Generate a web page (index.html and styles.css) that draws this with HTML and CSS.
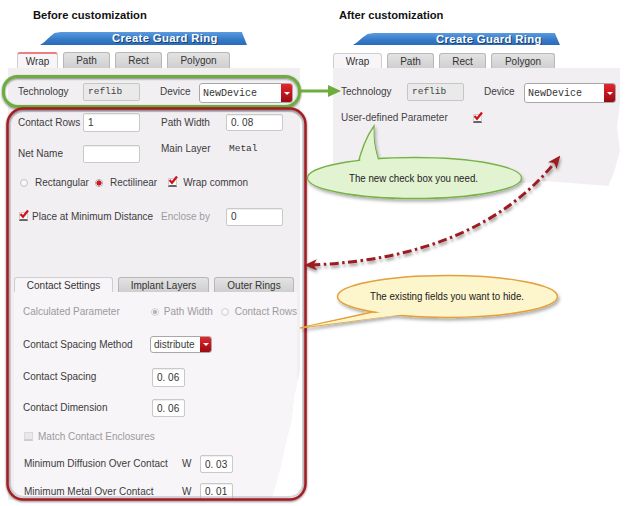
FILE: index.html
```html
<!DOCTYPE html>
<html>
<head>
<meta charset="utf-8">
<title>Create Guard Ring customization</title>
<link rel="stylesheet" href="styles.css">
</head>
<body>
<div class="stage">
  <section class="col before">
    <h2 class="title">Before customization</h2>
    <div class="dlg-head">Create Guard Ring</div>
    <div class="tabs">
      <div class="tab active red-top tw-wrap">Wrap</div>
      <div class="tab tw-path">Path</div>
      <div class="tab tw-rect">Rect</div>
      <div class="tab tw-poly">Polygon</div>
    </div>
    <div class="panel panel-left">
      <div class="row row-tech">
        <span class="lbl l-tech">Technology</span>
        <span class="ro">reflib</span>
        <span class="lbl l-dev">Device</span>
        <span class="dd dd-dev"><span class="dd-text mono">NewDevice</span><span class="dd-btn"></span></span>
      </div>
      <div class="row row-a">
        <span class="lbl c1">Contact Rows</span>
        <span class="field f1">1</span>
        <span class="lbl c2">Path Width</span>
        <span class="field f2">0. 08</span>
      </div>
      <div class="row row-b">
        <span class="lbl c1">Net Name</span>
        <span class="field f1b"></span>
        <span class="lbl c2 up">Main Layer</span>
        <span class="mono metal up">Metal</span>
      </div>
      <div class="row row-c">
        <span class="radio"></span><span class="lbl ml7">Rectangular</span>
        <span class="radio on ml6"></span><span class="lbl ml7">Rectilinear</span>
        <span class="chk ml11"><svg viewBox="0 0 10 10" width="10" height="10"><path d="M1.5 5 L4 7.8 L9 1.5" fill="none" stroke="#d0121b" stroke-width="2.2"/></svg></span><span class="lbl ml6">Wrap common</span>
      </div>
      <div class="row row-d">
        <span class="chk"><svg viewBox="0 0 10 10" width="10" height="10"><path d="M1.5 5 L4 7.8 L9 1.5" fill="none" stroke="#d0121b" stroke-width="2.2"/></svg></span>
        <span class="lbl ml4 l-place">Place at Minimum Distance</span>
        <span class="lbl dis c2b">Enclose by</span>
        <span class="field f2b">0</span>
      </div>

      <div class="subtabs">
        <div class="tab active st-cs">Contact Settings</div>
        <div class="tab st-il">Implant Layers</div>
        <div class="tab st-or">Outer Rings</div>
      </div>
      <div class="subpanel">
        <div class="row r33">
          <span class="lbl dis s-calc">Calculated Parameter</span>
          <span class="radio dis dot"></span><span class="lbl dis ml5">Path Width</span>
          <span class="radio dis ml8"></span><span class="lbl dis ml6">Contact Rows</span>
        </div>
        <div class="row r33">
          <span class="lbl s-csm">Contact Spacing Method</span>
          <span class="dd dd-dist"><span class="dd-text">distribute</span><span class="dd-btn"></span></span>
        </div>
        <div class="row r32">
          <span class="lbl s-cs">Contact Spacing</span>
          <span class="field fs">0. 06</span>
        </div>
        <div class="row r30">
          <span class="lbl s-cs">Contact Dimension</span>
          <span class="field fs fs18">0. 06</span>
        </div>
        <div class="row r27">
          <span class="chk dis ml1"></span><span class="lbl dis ml5">Match Contact Enclosures</span>
        </div>
        <div class="row r28">
          <span class="lbl s-min">Minimum Diffusion Over Contact</span>
          <span class="lbl s-w">W</span>
          <span class="field fw">0. 03</span>
        </div>
        <div class="row r-last">
          <span class="lbl s-min">Minimum Metal Over Contact</span>
          <span class="lbl s-w">W</span>
          <span class="field fw fw17">0. 01</span>
        </div>
      </div>
    </div>
  </section>

  <section class="col after">
    <h2 class="title">After customization</h2>
    <div class="dlg-head">Create Guard Ring</div>
    <div class="tabs">
      <div class="tab active tr-wrap">Wrap</div>
      <div class="tab tw-path">Path</div>
      <div class="tab tw-rect">Rect</div>
      <div class="tab tr-poly">Polygon</div>
    </div>
    <div class="panel panel-right">
      <div class="row row-tech-r">
        <span class="lbl l-tech-r">Technology</span>
        <span class="ro">reflib</span>
        <span class="lbl l-dev-r">Device</span>
        <span class="dd dd-dev-r"><span class="dd-text mono">NewDevice</span><span class="dd-btn"></span></span>
      </div>
      <div class="row row-user">
        <span class="lbl l-user">User-defined Parameter</span>
        <span class="chk"><svg viewBox="0 0 10 10" width="10" height="10"><path d="M1.5 5 L4 7.8 L9 1.5" fill="none" stroke="#d0121b" stroke-width="2.2"/></svg></span>
      </div>
    </div>
  </section>

  <svg class="notes" width="628" height="506" viewBox="0 0 628 506">
    <defs>
      <filter id="ringsh" x="-5%" y="-20%" width="110%" height="140%">
        <feDropShadow dx="0" dy="1" stdDeviation="1.3" flood-color="#000" flood-opacity="0.5"/>
      </filter>
      <filter id="bubsh" x="-10%" y="-20%" width="125%" height="150%">
        <feDropShadow dx="1.5" dy="2.5" stdDeviation="1.6" flood-color="#000" flood-opacity="0.3"/>
      </filter>
      <filter id="arrsh" x="-10%" y="-20%" width="125%" height="150%">
        <feDropShadow dx="1" dy="2.5" stdDeviation="1.4" flood-color="#000" flood-opacity="0.4"/>
      </filter>
      <marker id="ah" viewBox="0 0 13 11" refX="6" refY="5.5" markerWidth="13" markerHeight="11" markerUnits="userSpaceOnUse" orient="auto-start-reverse">
        <path d="M0 0 L13 5.5 L0 11 L3.5 5.5 Z" fill="#9d1c24"/>
      </marker>
    </defs>

    <rect class="ring ring-green" x="3.5" y="76.5" width="296" height="30" rx="14"/>
    <path class="garrow" d="M300 91 H331"/>
    <path class="ghead" d="M328 85 L341 91 L328 97 Z"/>

    <rect class="ring-inner" x="10" y="111" width="293" height="386" rx="14"/>
    <rect class="ring ring-red" x="7.5" y="108.5" width="298" height="391" rx="16"/>

    <path class="dash" d="M311 265 Q 478 258 556 161" marker-start="url(#ah)" marker-end="url(#ah)"/>

    <g filter="url(#bubsh)">
      <path class="bub-g" d="M357 168 C 361 150, 366 137, 374 126 C 373 140, 375 153, 382 168 Z"/>
      <ellipse class="bub-g" cx="414.5" cy="178" rx="107" ry="20.5"/>
      <path class="bub-g-fill" d="M358.6 167 C 362.5 151, 367 139, 373.6 128.5 C 373 141, 375 153, 380.6 167 Z"/>
    </g>
    <text class="bub-text" x="349" y="182" textLength="129" lengthAdjust="spacingAndGlyphs">The new check box you need.</text>

    <g filter="url(#bubsh)">
      <path class="bub-y" d="M386 309 L300 328 L416 312 Z"/>
      <ellipse class="bub-y" cx="447.5" cy="296.5" rx="110" ry="21"/>
      <path class="bub-y-fill" d="M386 311 L305 327 L414 313 Z"/>
    </g>
    <text class="bub-text" x="370" y="300" textLength="154" lengthAdjust="spacingAndGlyphs">The existing fields you want to hide.</text>
  </svg>
</div>
</body>
</html>
```

FILE: styles.css
```css
* { box-sizing: border-box; }
html, body { margin: 0; padding: 0; background: #fff; }
body {
  font-family: "Liberation Sans", Arial, sans-serif;
  font-size: 10px;
  color: #3c3c3c;
}
.stage {
  position: relative;
  width: 628px;
  height: 506px;
  overflow: hidden;
  display: flex;
  background: #fff;
}
.col { display: flex; flex-direction: column; }
.before { width: 333px; flex: none; }
.after { flex: 1; }

.title {
  margin: 0;
  padding: 8px 0 0 33px;
  height: 22px;
  font-size: 11.2px;
  line-height: 14px;
  font-weight: bold;
  color: #111;
}
.after .title { padding-left: 6px; }

.dlg-head {
  margin: 10px 0 0 40px;
  width: 207px;
  height: 13px;
  padding-left: 72px;
  background: linear-gradient(#5a9be0, #3479c6 60%, #2b6bb8);
  clip-path: polygon(0 100%, 2% 78%, 4.5% 40%, 7% 8%, 10% 0, 97.5% 0, 100% 100%);
  color: #fff;
  font-weight: bold;
  font-size: 11.3px;
  line-height: 13px;
  letter-spacing: 0.35px;
  text-shadow: 1px 1px 0 #1b416f;
  white-space: nowrap;
}
.after .dlg-head { margin: 11px 0 0 20px; height: 12px; line-height: 12px; padding-left: 83px; }

.tabs {
  display: flex;
  gap: 5px;
  margin-top: 7px;
  padding-left: 17px;
  height: 16px;
}
.after .tabs { padding-left: 0; margin-top: 8px; height: 15px; }

.tab {
  height: 100%;
  display: flex;
  align-items: center;
  justify-content: center;
  border: 1px solid #b7b7b7;
  border-bottom: none;
  border-radius: 3px 3px 0 0;
  background: linear-gradient(#e3e3e3, #cfcfcf);
  color: #333;
  white-space: nowrap;
}
.tab.active { background: #f7f5f8; border-color: #d0cdd1; }
.tab.red-top { border-top: 2px solid #eb7f7f; }
.tw-wrap { width: 41px; }
.tw-path { width: 47px; }
.tw-rect { width: 47px; }
.tw-poly { width: 63px; }
.tr-wrap { width: 49px; }
.tr-poly { width: 64px; }

.panel { background: #f2eff3; }
.panel-left {
  margin-left: 8px;
  width: 292px;
  height: 432px;
  padding-top: 8px;
  overflow: hidden;
  clip-path: polygon(0 0, 100% 0, 100% 70%, 98% 76%, 97% 82%, 95% 87%, 93.5% 92%, 91.5% 97%, 90% 100%, 0 100%);
}
.panel-right {
  width: 287px;
  height: 118px;
  padding: 8px 0 0 8px;
  clip-path: polygon(0 0, 100% 0, 100% 30%, 99% 50%, 100% 70%, 98% 88%, 96% 100%, 75% 96%, 50% 100%, 25% 97%, 0 100%);
}

.row { display: flex; align-items: center; }
.lbl { line-height: 12px; white-space: nowrap; }
.dis { color: #9d9a9e; }
.mono { font-family: "Liberation Mono", "Courier New", monospace; color: #333; }

.ml1 { margin-left: 1px; }
.ml4 { margin-left: 4px; }
.ml5 { margin-left: 5px; }
.ml6 { margin-left: 6px; }
.ml7 { margin-left: 7px; }
.ml8 { margin-left: 8px; }
.ml11 { margin-left: 11px; }

.ro {
  width: 57px;
  height: 18px;
  display: flex;
  align-items: center;
  padding-left: 4px;
  background: #ebeaeb;
  border: 1px solid #c6c6c6;
  border-radius: 2px;
  font-family: "Liberation Mono", "Courier New", monospace;
  font-size: 9.5px;
  color: #444;
}
.field {
  display: flex;
  align-items: center;
  padding-left: 4px;
  background: #fff;
  border: 1px solid #c9c9c9;
  border-radius: 2px;
  box-shadow: inset 0 1px 1px rgba(0, 0, 0, 0.07);
  color: #333;
  white-space: nowrap;
}

.dd {
  display: flex;
  align-items: stretch;
  background: #fff;
  border: 1px solid #a8a8a8;
  border-radius: 3px;
  overflow: hidden;
}
.dd-text { flex: 1; display: flex; align-items: center; padding-left: 3px; }
.dd .mono { font-size: 10px; }
.dd-btn {
  width: 11px;
  display: flex;
  align-items: center;
  justify-content: center;
  background: linear-gradient(#e5262f, #9b0a11);
}
.dd-btn::after {
  content: "";
  border-left: 3px solid transparent;
  border-right: 3px solid transparent;
  border-top: 3px solid #fff;
}

.radio {
  width: 8px;
  height: 8px;
  flex: none;
  border-radius: 50%;
  border: 1px solid #c9c6c9;
  background: radial-gradient(circle at 50% 40%, #fff, #e9e7e9);
}
.radio.on { background: radial-gradient(circle, #d3151d 0 2.3px, #fff 2.9px); border-color: #aaa; }
.radio.dis { border-color: #d6d3d6; }
.radio.dot { background: radial-gradient(circle, #b9b6b9 0 1.8px, #f7f7f7 2.4px); }

.chk {
  width: 9px;
  height: 9px;
  flex: none;
  display: flex;
  align-items: flex-end;
  justify-content: center;
  background: #fafafa;
  border: 1px solid #cfcfcf;
  border-bottom: 2px solid #666;
  overflow: visible;
}
.chk svg { flex: none; }
.chk.dis { background: #ebe8eb; border: 1px solid #dcd9dc; border-bottom: 2px solid #d0cdd0; }

/* left top section */
.row-tech { height: 31px; padding-left: 10px; }
.l-tech { width: 65px; }
.l-dev { margin-left: 20px; width: 39px; }
.dd-dev { width: 94px; height: 20px; margin-top: 3px; }

.row-a { height: 31px; padding-left: 10px; }
.c1 { width: 65px; }
.c2 { margin-left: 21px; width: 65px; }
.f1 { width: 57px; height: 19px; }
.f2 { width: 57px; height: 17px; }

.row-b { height: 32px; padding-left: 10px; }
.f1b { width: 57px; height: 18px; }
.up { align-self: flex-start; margin-top: 5px; }
.metal { margin-left: 3px; font-size: 9.5px; line-height: 12px; }

.row-c { height: 25px; padding-left: 12px; }

.row-d { height: 43px; padding-left: 11px; }
.l-place { width: 129px; }
.c2b { width: 65px; }
.f2b { width: 57px; height: 18px; }

.subtabs {
  display: flex;
  gap: 5px;
  height: 15px;
  margin: 39px 0 0 6px;
}
.st-cs { width: 99px; }
.st-il { width: 91px; }
.st-or { width: 80px; }

.subpanel {
  margin-left: 6px;
  width: 283px;
  height: 208px;
  padding: 3px 0 0 9px;
  background: #f7f5f7;
  overflow: hidden;
}
.r33 { height: 33px; }
.r32 { height: 32px; }
.r30 { height: 30px; }
.r27 { height: 27px; }
.r28 { height: 28px; }
.r-last { height: 22px; align-items: flex-end; }
.r-last .lbl { margin-bottom: 2px; }
.s-calc { width: 131px; }
.s-csm { width: 127px; }
.dd-dist { width: 62px; height: 17px; }
.s-cs { width: 129px; }
.fs { width: 33px; height: 19px; }
.fs18 { height: 18px; }
.s-min { width: 159px; padding-left: 1px; }
.s-w { width: 18px; }
.fw { width: 33px; height: 18px; }
.fw17 { height: 17px; }

/* right */
.row-tech-r { height: 31px; }
.l-tech-r { width: 66px; }
.l-dev-r { margin-left: 20px; width: 40px; }
.dd-dev-r { width: 92px; height: 20px; margin-top: 3px; }
.row-user { height: 22px; }
.l-user { width: 132px; color: #444; }

/* annotations */
.notes { position: absolute; left: 0; top: 0; pointer-events: none; }
.ring { fill: none; filter: url(#ringsh); }
.ring-green { stroke: #6dac3d; stroke-width: 3; }
.ring-red { stroke: #a41e25; stroke-width: 2.5; }
.ring-inner { fill: none; stroke: #b9b6ba; stroke-width: 2; opacity: 0.55; }
.garrow { stroke: #6dac3d; stroke-width: 3; fill: none; }
.ghead { fill: #6dac3d; }
.dash {
  fill: none;
  stroke: #9d1c24;
  stroke-width: 3;
  stroke-dasharray: 9 3.5 2.5 3.5;
  filter: url(#arrsh);
}
.bub-g { fill: #e2f3d2; stroke: #76b244; stroke-width: 1.3; }
.bub-g-fill { fill: #e2f3d2; }
.bub-y { fill: #fdf5cb; stroke: #e3a03b; stroke-width: 1.5; }
.bub-y-fill { fill: #fdf5cb; }
.bub-text {
  font-family: "Liberation Sans", Arial, sans-serif;
  font-size: 11.5px;
  fill: #222;
}
```
